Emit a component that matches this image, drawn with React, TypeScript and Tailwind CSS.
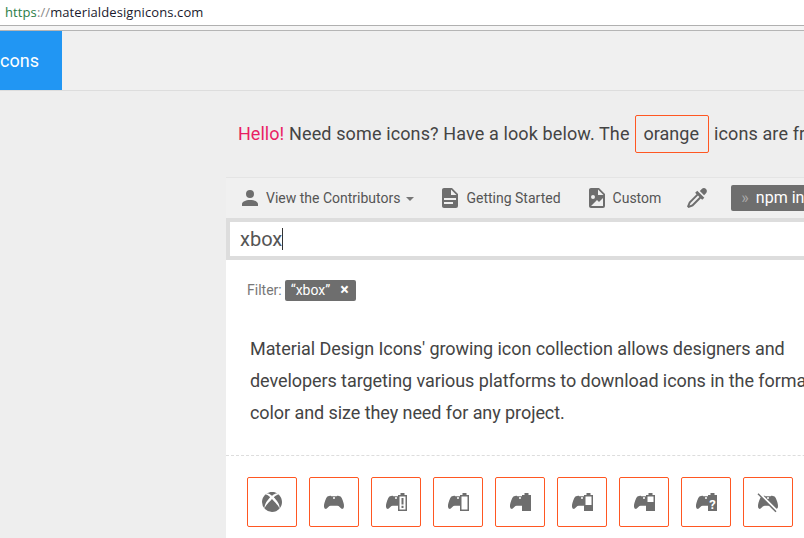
import React from "react";

const controller =
  "M8.75,15.75C6.75,15.75 6,18 4,19C2,19 0.5,16 4.5,7.5H4.75L5.19,6.67C5.19,6.67 8,5 9.33,6.23H14.67C16,5 18.81,6.67 18.81,6.67L19.25,7.5H19.5C23.5,16 22,19 20,19C18,18 17.25,15.75 15.25,15.75H8.75M12,7A1,1 0 0,0 11,8A1,1 0 0,0 12,9A1,1 0 0,0 13,8A1,1 0 0,0 12,7Z";

const Mdi = ({ d, className }: { d: string; className: string }) => (
  <svg viewBox="0 0 24 24" className={className} fill="currentColor" fillRule="evenodd">
    <path d={d} />
  </svg>
);

const account = "M12,4A4,4 0 0,1 16,8A4,4 0 0,1 12,12A4,4 0 0,1 8,8A4,4 0 0,1 12,4M12,14C16.42,14 20,15.79 20,18V20H4V18C4,15.79 7.58,14 12,14Z";
const fileDoc = "M13,9H18.5L13,3.5V9M6,2H14L20,8V20A2,2 0 0,1 18,22H6C4.89,22 4,21.1 4,20V4C4,2.89 4.89,2 6,2M15,18V16H6V18H15M18,14V12H6V14H18Z";
const fileImage = "M13,9H18.5L13,3.5V9M6,2H14L20,8V20A2,2 0 0,1 18,22H6C4.89,22 4,21.1 4,20V4C4,2.89 4.89,2 6,2M6,20H18V12L14,16L12,14L6,20M8,9A2,2 0 0,0 6,11A2,2 0 0,0 8,13A2,2 0 0,0 10,11A2,2 0 0,0 8,9Z";
const dropper = "M19.35,11.72L17.22,13.85L15.81,12.43L8.1,20.14L3.5,22L2,20.5L3.86,15.9L11.57,8.19L10.15,6.78L12.28,4.65L19.35,11.72M16.76,3C17.93,1.83 19.83,1.83 21,3C22.17,4.17 22.17,6.07 21,7.24L19.08,9.16L14.84,4.92L16.76,3M5.56,17.03L4.5,19.5L6.97,18.44L14.4,11L13,9.6L5.56,17.03Z";
const xbox = "M6.43,3.72C6.5,3.66 6.57,3.6 6.62,3.56C8.18,2.55 10,2 12,2C13.88,2 15.64,2.5 17.14,3.42C17.25,3.5 17.54,3.69 17.7,3.88C16.25,2.28 12,5.7 12,5.7C10.5,4.57 9.17,3.8 8.16,3.5C7.31,3.29 6.73,3.5 6.46,3.7M19.34,5.21C19.29,5.16 19.24,5.11 19.2,5.06C18.84,4.66 18.38,4.56 18,4.59C17.61,4.71 15.9,5.32 13.8,7.31C13.8,7.31 16.17,9.61 17.62,11.96C19.07,14.31 19.93,16.16 19.4,18.73C21,16.95 22,14.59 22,12C22,9.38 21,7 19.34,5.21M15.73,12.96C15.08,12.24 14.13,11.21 12.86,9.95C12.59,9.68 12.3,9.4 12,9.1C12,9.1 11.53,9.56 10.93,10.17C10.16,10.94 9.17,11.95 8.61,12.54C7.63,13.59 4.81,16.89 4.65,18.74C4.65,18.74 4,17.28 5.4,13.89C6.3,11.68 9,8.36 10.15,7.28C10.15,7.28 9.12,6.14 7.82,5.35L7.77,5.32C7.14,4.95 6.46,4.66 5.8,4.62C5.13,4.67 4.71,5.16 4.71,5.16C3.03,6.95 2,9.35 2,12A10,10 0 0,0 12,22C14.93,22 17.57,20.74 19.4,18.73C19.4,18.73 19.19,17.4 17.84,15.5C17.53,15.07 16.37,13.69 15.73,12.96Z";

const batteryBody = "M16.5,3H20.5V5H23V21H14V5H16.5Z";

// battery sits on top of the controller's right half, gap = white part of the cell
const PadBattery = ({ gapY, gapH, mark, bang }: { gapY?: number; gapH?: number; mark?: string; bang?: boolean }) => (
  <svg viewBox="0 0 24 24" className="size-6" fill="currentColor">
    <path d={controller} fillRule="evenodd" />
    <path d={batteryBody} />
    {gapH !== undefined && <rect x="15.5" y={gapY} width="6" height={gapH} fill="#fff" />}
    {bang && <path d="M17.5,8H19.5V14.5H17.5ZM17.5,15.8H19.5V18H17.5Z" />}
    {mark && (
      <text x="18.5" y="18.5" fontSize="13" fontWeight="700" textAnchor="middle" fill="#fff" fontFamily="Roboto, sans-serif">
        {mark}
      </text>
    )}
  </svg>
);

const OffPad = () => (
  <svg viewBox="0 0 24 24" className="size-6" fill="currentColor">
    <path d={controller} fillRule="evenodd" />
    <path d="M3,3L21,21" stroke="#fff" strokeWidth="2.5" />
    <path d="M2,3.8L20,21.8" stroke="currentColor" strokeWidth="1.5" />
  </svg>
);

const icons = [
  <Mdi d={xbox} className="size-6" />,
  <Mdi d={controller} className="size-6" />,
  <PadBattery gapY={6.5} gapH={13} bang />,
  <PadBattery gapY={6.5} gapH={13} />,
  <PadBattery />,
  <PadBattery gapY={6.5} gapH={8.5} />,
  <PadBattery gapY={6.5} gapH={5.5} />,
  <PadBattery mark="?" />,
  <OffPad />,
];

export default function App() {
  return (
    <div className="flex h-[538px] w-[804px] flex-col overflow-hidden bg-[#eeeeee] font-['Roboto',sans-serif] text-[#444444]">
      <div className="h-[26px] border-b border-[#b0b0b0] bg-white pl-[5px] font-['Open_Sans',sans-serif] text-[13px] leading-[25px] tracking-[0.1px] text-[#1a1a2e]">
        <span className="text-[#2a7d46]">https</span>
        <span className="text-[#8a8a8a]">://</span>materialdesignicons.com
      </div>
      <div className="h-[5px] border-b border-[#b5b5b5] bg-[#f5f5f5]" />
      <header className="flex h-[60px] border-b border-[#dddddd] bg-[#f0f0f0]">
        <div className="flex h-[59px] w-[62px] items-center bg-[#2196f3] text-lg text-white">cons</div>
      </header>

      <main className="ml-[226px] flex w-[700px] flex-1 flex-col">
        <p className="mt-6 flex h-[38px] items-center whitespace-nowrap pl-3 text-lg text-[#444444]">
          <span className="text-[#e91e63]">Hello!</span>
          <span className="ml-[5px] tracking-[0.12px]">Need some icons? Have a look below. The</span>
          <span className="mx-[5px] flex h-[38px] items-center rounded-[2px] border border-[#ff5722] pl-2 pr-[9px]">orange</span>
          <span className="tracking-[0.12px]">icons are free.</span>
        </p>

        <nav className="mt-6 flex h-[41px] items-center border-t border-[#e4e4e4] bg-[#f0f0f0] pl-3 text-sm text-[#555555]">
          <Mdi d={account} className="size-6 text-[#6e6e6e]" />
          <span className="ml-1">View the Contributors</span>
          <span className="ml-[6px] mt-px h-0 w-0 border-x-4 border-t-4 border-x-transparent border-t-[#777777]" />
          <Mdi d={fileDoc} className="ml-6 size-6 text-[#6e6e6e]" />
          <span className="ml-1">Getting Started</span>
          <Mdi d={fileImage} className="ml-6 size-6 text-[#6e6e6e]" />
          <span className="ml-1">Custom</span>
          <Mdi d={dropper} className="ml-6 size-6 text-[#6e6e6e]" />
          <span className="ml-[22px] flex h-[26px] items-center whitespace-nowrap rounded-[2px] bg-[#6e6e6e] pl-[10px] text-base text-white">
            <span className="mr-[7px] text-base text-[#aaaaaa]">»</span>npm install
          </span>
        </nav>

        <div className="flex h-[42px] items-center border-y-4 border-l-4 border-[#dddddd] bg-white pl-[10px] text-xl text-[#555555]">
          xbox<span className="h-[22px] w-px bg-[#333333]" />
        </div>

        <section className="flex-1 bg-white">
          <div className="mt-[19px] flex h-[22px] items-center pl-[21px] text-sm text-[#777777]">
            Filter:
            <span className="ml-[3px] flex h-[21px] items-center rounded-[2px] bg-[#6e6e6e] pl-[6px] pr-[7px] text-sm text-white">
              “xbox”<span className="ml-[10px] text-base font-bold leading-none">×</span>
            </span>
          </div>
          <p className="mt-8 h-[123px] border-b border-dashed border-[#dddddd] pl-6 text-lg leading-8 tracking-[-0.07px] text-[#444444]">
            Material Design Icons' growing icon collection allows designers and
            <br />
            developers targeting various platforms to download icons in the format,
            <br />
            color and size they need for any project.
          </p>
          <div className="flex gap-3 pl-[21px] pt-[21px]">
            {icons.map((icon, i) => (
              <div key={i} className="flex size-[50px] shrink-0 items-center justify-center rounded-[2px] border border-[#ff5722] text-[#6e6e6e]">
                {icon}
              </div>
            ))}
          </div>
        </section>
      </main>
    </div>
  );
}
